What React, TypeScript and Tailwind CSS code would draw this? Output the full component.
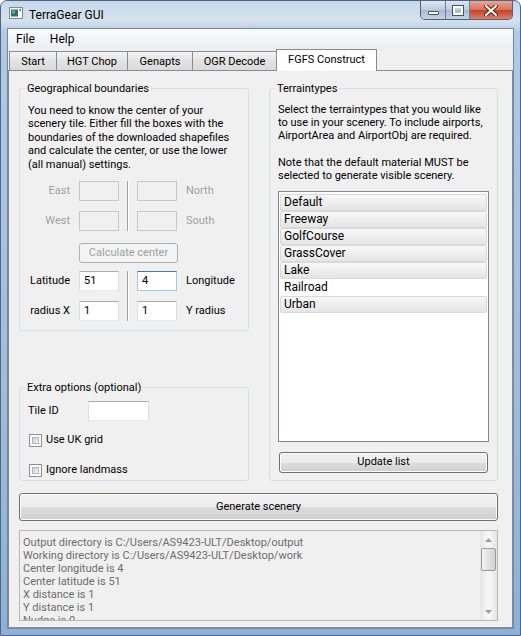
import React from 'react'

const tabs = [
  { label: 'Start', w: 'w-[48px]' },
  { label: 'HGT Chop', w: 'w-[72px]' },
  { label: 'Genapts', w: 'w-[66px]' },
  { label: 'OGR Decode', w: 'w-[85px]' },
]

const terrains = [
  { name: 'Default', on: true },
  { name: 'Freeway', on: true },
  { name: 'GolfCourse', on: true },
  { name: 'GrassCover', on: true },
  { name: 'Lake', on: true },
  { name: 'Railroad', on: false },
  { name: 'Urban', on: true },
]

const log = [
  'Output directory is C:/Users/AS9423-ULT/Desktop/output',
  'Working directory is C:/Users/AS9423-ULT/Desktop/work',
  'Center longitude is 4',
  'Center latitude is 51',
  'X distance is 1',
  'Y distance is 1',
  'Nudge is 0',
]

// vista style push button
function Button({ children, className = '', disabled = false }: { children: React.ReactNode; className?: string; disabled?: boolean }) {
  return (
    <div
      className={`flex items-center justify-center rounded-[3px] border whitespace-nowrap ${
        disabled
          ? 'border-[#adb2b5] bg-[#f4f4f4] text-[#a0a0a0]'
          : 'border-[#707070] bg-[linear-gradient(#f2f2f2_0%,#ebebeb_50%,#dddddd_51%,#cfcfcf_100%)] text-black shadow-[inset_0_0_0_1px_#fcfcfc]'
      } ${className}`}
    >
      {children}
    </div>
  )
}

function Field({ value = '', state = 'on', className = 'w-[40px]' }: { value?: string; state?: 'on' | 'off' | 'focus'; className?: string }) {
  const look =
    state === 'off'
      ? 'border-[#c5c7ca] bg-[#f0f0f0]'
      : state === 'focus'
      ? 'border-[#a4c9e3] border-t-[#3d7bad] bg-white'
      : 'border-[#dbdfe6] border-t-[#abadb3] border-b-[#e3e9ef] bg-white'
  return (
    <div className={`h-[20px] shrink-0 border pl-[4px] leading-[18px] ${look} ${className}`}>{value}</div>
  )
}

function Sep() {
  return <div className="w-[2px] self-stretch border-l border-[#a0a0a0] border-r border-r-white" />
}

function CheckBox({ label }: { label: string }) {
  return (
    <div className="flex items-center h-[13px] ml-[1px]">
      <div className="w-[13px] h-[13px] border border-[#8f8f8f] bg-white p-[2px]">
        <div className="w-full h-full border border-[#aeb3b9] bg-[linear-gradient(135deg,#cbcfd5,#f6f6f6)]" />
      </div>
      <span className="ml-[4px] whitespace-nowrap">{label}</span>
    </div>
  )
}

function GroupBox({ title, className, children }: { title: string; className: string; children: React.ReactNode }) {
  return (
    <fieldset className={`border border-[#d5dfe5] rounded-[3px] ${className}`}>
      <legend className="ml-[5px] px-[2px] leading-[15px] whitespace-nowrap">{title}</legend>
      {children}
    </fieldset>
  )
}

function TitleBar() {
  return (
    <div className="h-[27px] flex items-start">
      <svg width="14" height="12" viewBox="0 0 14 12" className="ml-[8px] mt-[6px]">
        <rect x="0.5" y="0.5" width="13" height="11" fill="#fff" stroke="#7b8794" />
        <rect x="2" y="2.5" width="7" height="7" fill="#2f6e63" />
        <rect x="3" y="3.5" width="3" height="3" fill="#6fa89c" />
        <rect x="10.5" y="2" width="1.5" height="2" fill="#55606b" />
      </svg>
      <span className="ml-[6px] mt-[6px] leading-[16px] text-[12px] text-black">TerraGear GUI</span>
      <div className="ml-auto mr-[7px] flex h-[19px] rounded-b-[5px] border border-t-0 border-[#4f627a] overflow-hidden">
        <div className="w-[25px] flex items-end justify-center pb-[4px] border-r border-[#6b7f98] bg-[linear-gradient(#dfe8f2,#b9cadd_50%,#a6bbd2_51%,#c2d3e4)]">
          <div className="w-[11px] h-[4px] rounded-[1px] border border-[#41546b] bg-white" />
        </div>
        <div className="w-[24px] flex items-center justify-center border-r border-[#6b7f98] bg-[linear-gradient(#dfe8f2,#b9cadd_50%,#a6bbd2_51%,#c2d3e4)]">
          <div className="w-[10px] h-[9px] border-2 border-white outline outline-1 outline-[#41546b]" />
        </div>
        <div className="w-[42px] flex items-center justify-center bg-[linear-gradient(#e8a796,#d7705b_50%,#c4412b_51%,#d9826a)]">
          <svg width="14" height="11" viewBox="0 0 14 11">
            <path d="M2 1 L12 10 M12 1 L2 10" stroke="#5a1a10" strokeWidth="4" strokeLinecap="round" />
            <path d="M2 1 L12 10 M12 1 L2 10" stroke="#fff" strokeWidth="2.2" strokeLinecap="round" />
          </svg>
        </div>
      </div>
    </div>
  )
}

function Tabs() {
  return (
    <div className="h-[21px] flex items-end pl-[1px]">
      {tabs.map((t, i) => (
        <div
          key={t.label}
          className={`${t.w} h-[19px] ${i > 0 ? '-ml-px' : ''} flex items-center justify-center border border-b-0 border-[#898c95] bg-[linear-gradient(#f4f4f4,#e3e3e3_50%,#dadada)] leading-[17px] whitespace-nowrap`}
        >
          {t.label}
        </div>
      ))}
      <div className="w-[101px] h-[22px] -ml-px -mb-px relative z-10 flex items-start justify-center pt-[2px] border border-b-0 border-[#898c95] bg-white whitespace-nowrap">
        FGFS Construct
      </div>
    </div>
  )
}

function GeoBox() {
  return (
    <GroupBox title="Geographical boundaries" className="h-[250px]">
      <div className="pl-[8px] pt-[8px] leading-[13.4px] whitespace-nowrap">
        <div>You need to know the center of your</div>
        <div>scenery tile. Either fill the boxes with the</div>
        <div>boundaries of the downloaded shapefiles</div>
        <div>and calculate the center, or use the lower</div>
        <div>(all manual) settings.</div>
      </div>

      <div className="flex pl-[8px] mt-[10px] text-[#a0a0a0] whitespace-nowrap">
        <div className="flex flex-col gap-[10px]">
          <div className="flex items-center gap-[9px]">
            <span className="w-[42px] text-right">East</span>
            <Field state="off" />
          </div>
          <div className="flex items-center gap-[9px]">
            <span className="w-[42px] text-right">West</span>
            <Field state="off" />
          </div>
        </div>
        <div className="mx-[8px] flex"><Sep /></div>
        <div className="flex flex-col gap-[10px]">
          <div className="flex items-center gap-[9px]">
            <Field state="off" />
            <span>North</span>
          </div>
          <div className="flex items-center gap-[9px]">
            <Field state="off" />
            <span>South</span>
          </div>
        </div>
      </div>

      <Button disabled className="ml-[59px] mt-[12px] w-[99px] h-[20px]">Calculate center</Button>

      <div className="flex pl-[8px] mt-[8px] whitespace-nowrap">
        <div className="flex flex-col gap-[10px]">
          <div className="flex items-center gap-[9px]">
            <span className="w-[42px] text-right">Latitude</span>
            <Field value="51" />
          </div>
          <div className="flex items-center gap-[9px]">
            <span className="w-[42px] text-right">radius X</span>
            <Field value="1" />
          </div>
        </div>
        <div className="mx-[8px] flex"><Sep /></div>
        <div className="flex flex-col gap-[10px]">
          <div className="flex items-center gap-[9px]">
            <Field value="4" state="focus" />
            <span>Longitude</span>
          </div>
          <div className="flex items-center gap-[9px]">
            <Field value="1" />
            <span>Y radius</span>
          </div>
        </div>
      </div>
    </GroupBox>
  )
}

function ExtraBox() {
  return (
    <GroupBox title="Extra options (optional)" className="h-[101px]">
      <div className="flex items-center pl-[8px] mt-[6px]">
        <span className="w-[60px] whitespace-nowrap">Tile ID</span>
        <Field className="w-[61px]" />
      </div>
      <div className="pl-[8px] mt-[13px]"><CheckBox label="Use UK grid" /></div>
      <div className="pl-[8px] mt-[17px]"><CheckBox label="Ignore landmass" /></div>
    </GroupBox>
  )
}

function TerrainBox() {
  return (
    <GroupBox title="Terraintypes" className="h-[400px]">
      <div className="pl-[8px] pt-[7px] leading-[13.2px] whitespace-nowrap">
        <div>Select the terraintypes that you would like</div>
        <div>to use in your scenery. To include airports,</div>
        <div>AirportArea and AirportObj are required.</div>
        <div>&nbsp;</div>
        <div>Note that the default material MUST be</div>
        <div>selected to generate visible scenery.</div>
      </div>
      <div className="ml-[8px] mt-[9px] w-[211px] h-[251px] border border-[#828790] bg-white p-[1px] pt-[2px]">
        {terrains.map(t => (
          <div
            key={t.name}
            className={`h-[17px] pl-[3px] leading-[15px] text-[12px] rounded-[2px] border ${
              t.on ? 'border-[#d9d9d9] bg-[linear-gradient(#f8f8f8,#e5e5e5)]' : 'border-transparent'
            }`}
          >
            {t.name}
          </div>
        ))}
      </div>
      <Button className="ml-[9px] mt-[10px] w-[209px] h-[21px]">Update list</Button>
    </GroupBox>
  )
}

function Arrow({ up }: { up?: boolean }) {
  return (
    <svg width="7" height="4" viewBox="0 0 7 4">
      <path d={up ? 'M0 4 L3.5 0 L7 4 Z' : 'M0 0 L3.5 4 L7 0 Z'} fill="#9aa0a8" />
    </svg>
  )
}

function LogView() {
  return (
    <div className="h-[91px] flex border border-[#b8b8b8] bg-[#f0f0f0] overflow-hidden">
      <div className="flex-1 pl-[3px] pt-[5px] leading-[13px] text-[#6d6d6d] overflow-hidden">
        {log.map(l => (
          <div key={l} className="whitespace-nowrap">{l}</div>
        ))}
      </div>
      <div className="w-[17px] flex flex-col bg-[linear-gradient(90deg,#e4e4e4,#f5f5f5_40%,#f5f5f5_60%,#e4e4e4)]">
        <div className="h-[17px] flex items-center justify-center"><Arrow up /></div>
        <div className="mx-[1px] h-[23px] rounded-[2px] border border-[#9b9b9b] bg-[linear-gradient(90deg,#f3f3f3,#e2e2e2_50%,#d3d3d3)]" />
        <div className="flex-1" />
        <div className="h-[17px] flex items-center justify-center"><Arrow /></div>
      </div>
    </div>
  )
}

export default function App() {
  return (
    <div className="w-[521px] h-[636px] flex flex-col rounded-t-[7px] border border-[#4c6686] bg-[linear-gradient(180deg,#c7d8ea_0%,#d6e2ee_3%,#b3cae2_5%,#a2bcd9_60%,#8fb0d4_100%)] text-[11px] text-black font-['Roboto','Liberation_Sans',sans-serif] overflow-hidden">
      <TitleBar />
      <div className="ml-[6px] w-[507px] h-[601px] flex flex-col border border-[#6a8aaf] bg-[#f0f0f0]">
        <div className="h-[20px] flex items-center bg-[linear-gradient(#fbfcfd,#e9eef4)] leading-[16px] text-[12px]">
          <span className="ml-[8px]">File</span>
          <span className="ml-[15px]">Help</span>
        </div>
        <Tabs />
        <div className="h-[558px] border border-[#898c95] pl-[10px] pr-[14px] pt-[10px] flex flex-col">
          <div className="h-[400px] flex gap-[20px]">
            <div className="w-[230px] flex flex-col justify-between">
              <GeoBox />
              <ExtraBox />
            </div>
            <div className="w-[229px]">
              <TerrainBox />
            </div>
          </div>
          <Button className="mt-[12px] h-[28px]">Generate scenery</Button>
          <div className="mt-[9px]">
            <LogView />
          </div>
        </div>
      </div>
    </div>
  )
}
